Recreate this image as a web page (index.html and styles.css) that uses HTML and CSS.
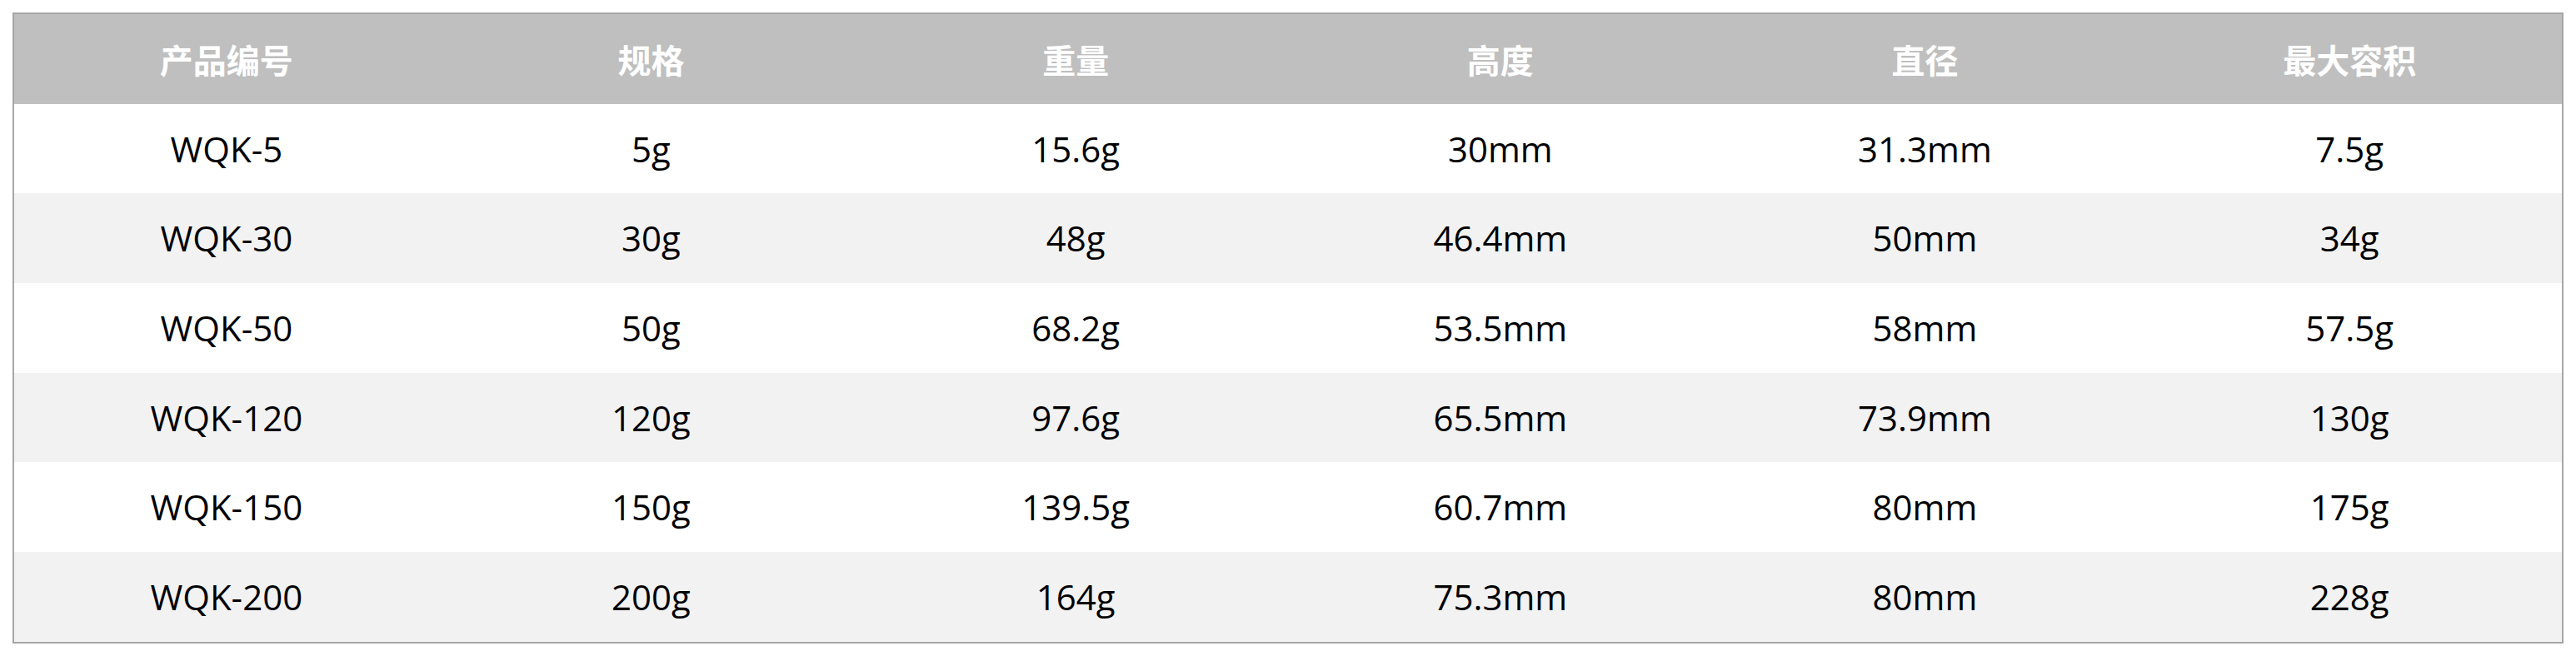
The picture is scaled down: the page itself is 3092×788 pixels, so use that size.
FILE: index.html
```html
<!DOCTYPE html>
<html lang="zh-CN">
<head>
<meta charset="utf-8">
<title>产品规格</title>
<link rel="stylesheet" href="styles.css">
</head>
<body>
<table class="spec">
  <thead>
    <tr><th>产品编号</th><th>规格</th><th>重量</th><th>高度</th><th>直径</th><th>最大容积</th></tr>
  </thead>
  <tbody>
    <tr><td>WQK-5</td><td>5g</td><td>15.6g</td><td>30mm</td><td>31.3mm</td><td>7.5g</td></tr>
    <tr><td>WQK-30</td><td>30g</td><td>48g</td><td>46.4mm</td><td>50mm</td><td>34g</td></tr>
    <tr><td>WQK-50</td><td>50g</td><td>68.2g</td><td>53.5mm</td><td>58mm</td><td>57.5g</td></tr>
    <tr><td>WQK-120</td><td>120g</td><td>97.6g</td><td>65.5mm</td><td>73.9mm</td><td>130g</td></tr>
    <tr><td>WQK-150</td><td>150g</td><td>139.5g</td><td>60.7mm</td><td>80mm</td><td>175g</td></tr>
    <tr><td>WQK-200</td><td>200g</td><td>164g</td><td>75.3mm</td><td>80mm</td><td>228g</td></tr>
  </tbody>
</table>
</body>
</html>
```

FILE: styles.css
```css
html, body {
  margin: 0;
  padding: 0;
  background: #ffffff;
}
body {
  padding: 15px;
  font-family: "Open Sans", "Noto Sans CJK SC", sans-serif;
}
.spec {
  width: 3062px;
  border-collapse: separate;
  border-spacing: 0;
  border: 2px solid #a6a6a6;
  table-layout: fixed;
}
.spec th,
.spec td {
  height: 107.7px;
  padding: 0;
  text-align: center;
  vertical-align: middle;
  font-size: 42px;
  line-height: 1;
}
.spec th {
  background: #bfbfbf;
  color: #ffffff;
  font-weight: 700;
  font-size: 40px;
  font-family: "Noto Sans CJK SC", sans-serif;
}
.spec td {
  color: #000000;
  font-weight: 400;
}
.spec tbody tr:nth-child(even) td {
  background: #f2f2f2;
}
```
